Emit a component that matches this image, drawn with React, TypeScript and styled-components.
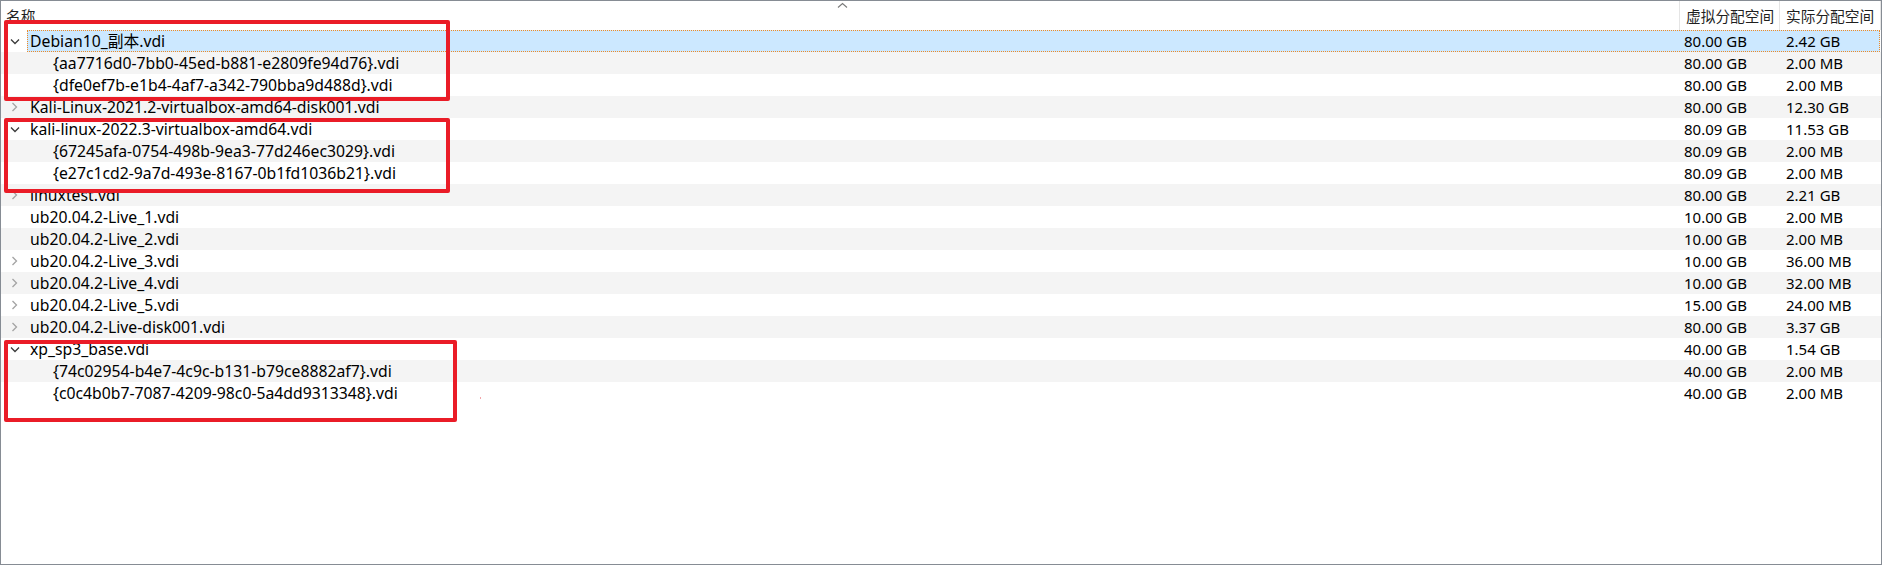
import React from "react";
import styled, { createGlobalStyle, css } from "styled-components";

const Global = createGlobalStyle`
  html, body { margin: 0; padding: 0; background: #ffffff; }
  body { font-family: "Noto Sans", "Noto Sans CJK SC", sans-serif; }
  * { box-sizing: border-box; }
`;

type Twisty = "open" | "closed" | "none";
interface Row {
  name: string;
  level: 0 | 1;
  twisty: Twisty;
  virt: string;
  actual: string;
  selected?: boolean;
}

const rows: Row[] = [
  { name: "Debian10_副本.vdi", level: 0, twisty: "open", virt: "80.00 GB", actual: "2.42 GB", selected: true },
  { name: "{aa7716d0-7bb0-45ed-b881-e2809fe94d76}.vdi", level: 1, twisty: "none", virt: "80.00 GB", actual: "2.00 MB" },
  { name: "{dfe0ef7b-e1b4-4af7-a342-790bba9d488d}.vdi", level: 1, twisty: "none", virt: "80.00 GB", actual: "2.00 MB" },
  { name: "Kali-Linux-2021.2-virtualbox-amd64-disk001.vdi", level: 0, twisty: "closed", virt: "80.00 GB", actual: "12.30 GB" },
  { name: "kali-linux-2022.3-virtualbox-amd64.vdi", level: 0, twisty: "open", virt: "80.09 GB", actual: "11.53 GB" },
  { name: "{67245afa-0754-498b-9ea3-77d246ec3029}.vdi", level: 1, twisty: "none", virt: "80.09 GB", actual: "2.00 MB" },
  { name: "{e27c1cd2-9a7d-493e-8167-0b1fd1036b21}.vdi", level: 1, twisty: "none", virt: "80.09 GB", actual: "2.00 MB" },
  { name: "linuxtest.vdi", level: 0, twisty: "closed", virt: "80.00 GB", actual: "2.21 GB" },
  { name: "ub20.04.2-Live_1.vdi", level: 0, twisty: "none", virt: "10.00 GB", actual: "2.00 MB" },
  { name: "ub20.04.2-Live_2.vdi", level: 0, twisty: "none", virt: "10.00 GB", actual: "2.00 MB" },
  { name: "ub20.04.2-Live_3.vdi", level: 0, twisty: "closed", virt: "10.00 GB", actual: "36.00 MB" },
  { name: "ub20.04.2-Live_4.vdi", level: 0, twisty: "closed", virt: "10.00 GB", actual: "32.00 MB" },
  { name: "ub20.04.2-Live_5.vdi", level: 0, twisty: "closed", virt: "15.00 GB", actual: "24.00 MB" },
  { name: "ub20.04.2-Live-disk001.vdi", level: 0, twisty: "closed", virt: "80.00 GB", actual: "3.37 GB" },
  { name: "xp_sp3_base.vdi", level: 0, twisty: "open", virt: "40.00 GB", actual: "1.54 GB" },
  { name: "{74c02954-b4e7-4c9c-b131-b79ce8882af7}.vdi", level: 1, twisty: "none", virt: "40.00 GB", actual: "2.00 MB" },
  { name: "{c0c4b0b7-7087-4209-98c0-5a4dd9313348}.vdi", level: 1, twisty: "none", virt: "40.00 GB", actual: "2.00 MB" },
];

const Window = styled.div`
  position: relative;
  width: 1882px;
  height: 565px;
  border: 1px solid #868c94;
  background: #ffffff;
  overflow: hidden;
  color: #000;
`;

const Header = styled.div`
  position: relative;
  display: grid;
  grid-template-columns: 1679px 100px 1fr;
  height: 29px;
  color: #1f1f1f;
  font-size: 14.7px;
`;

const HeaderCell = styled.div<{ $pad: number }>`
  display: flex;
  align-items: center;
  padding-left: ${(p) => p.$pad}px;
  padding-bottom: 1px;
  white-space: nowrap;
  border-right: 1px solid #e5e5e5;
`;

const SortArrow = styled.svg`
  position: absolute;
  left: 836px;
  top: 1px;
`;

const List = styled.div`
  display: flex;
  flex-direction: column;
`;

const RowLine = styled.div<{ $stripe: boolean }>`
  display: flex;
  height: 22px;
  background: ${(p) => (p.$stripe ? "#f4f4f4" : "transparent")};
`;

const TwistyBox = styled.div`
  width: 26px;
  flex: none;
  display: flex;
  align-items: center;
  justify-content: center;
  padding-left: 1px;
`;

const RowBody = styled.div<{ $selected: boolean }>`
  flex: 1;
  display: grid;
  grid-template-columns: 1653px 100px 1fr;
  align-items: center;
  margin-right: 1px;
  border: 1px solid transparent;
  ${(p) =>
    p.$selected &&
    css`
      background: #cce8ff;
      border: 1px dotted #f08a24;
    `}
`;

const NameCell = styled.div<{ $level: number }>`
  padding-left: ${(p) => (p.$level === 1 ? 25 : 2)}px;
  white-space: nowrap;
  line-height: 20px;
  font-size: 15.75px;
`;

const ValueCell = styled.div<{ $pad: number }>`
  padding-left: ${(p) => p.$pad}px;
  white-space: nowrap;
  line-height: 20px;
  font-size: 15px;
`;

const Annotation = styled.div<{ $l: number; $t: number; $w: number; $h: number }>`
  position: absolute;
  left: ${(p) => p.$l}px;
  top: ${(p) => p.$t}px;
  width: ${(p) => p.$w}px;
  height: ${(p) => p.$h}px;
  border: 4px solid #ea1c27;
  border-radius: 2px;
  pointer-events: none;
`;

const Speck = styled.div`
  position: absolute;
  left: 479px;
  top: 396px;
  width: 1px;
  height: 2px;
  background: #f2a6aa;
`;

function Chevron({ kind }: { kind: Twisty }) {
  if (kind === "open") {
    return (
      <svg width="10" height="7" viewBox="0 0 10 7">
        <path d="M1 1.5 L5 5.5 L9 1.5" fill="none" stroke="#3a3a3a" strokeWidth="1.3" />
      </svg>
    );
  }
  if (kind === "closed") {
    return (
      <svg width="7" height="10" viewBox="0 0 7 10">
        <path d="M1.5 1 L5.5 5 L1.5 9" fill="none" stroke="#a3a3a3" strokeWidth="1.3" />
      </svg>
    );
  }
  return null;
}

export default function App() {
  return (
    <>
      <Global />
      <Window>
        <Header>
          <HeaderCell $pad={5}>名称</HeaderCell>
          <HeaderCell $pad={6}>虚拟分配空间</HeaderCell>
          <HeaderCell $pad={6}>实际分配空间</HeaderCell>
          <SortArrow width="11" height="7" viewBox="0 0 11 7">
            <path d="M1 5.5 L5.5 1.5 L10 5.5" fill="none" stroke="#7a7a7a" strokeWidth="1.1" />
          </SortArrow>
        </Header>
        <List>
          {rows.map((r, i) => (
            <RowLine key={i} $stripe={i % 2 === 1}>
              <TwistyBox>
                <Chevron kind={r.twisty} />
              </TwistyBox>
              <RowBody $selected={!!r.selected}>
                <NameCell $level={r.level}>{r.name}</NameCell>
                <ValueCell $pad={3}>{r.virt}</ValueCell>
                <ValueCell $pad={5}>{r.actual}</ValueCell>
              </RowBody>
            </RowLine>
          ))}
        </List>
        <Annotation $l={3} $t={19} $w={446} $h={81} />
        <Annotation $l={3} $t={117} $w={446} $h={75} />
        <Annotation $l={3} $t={339} $w={453} $h={82} />
        <Speck />
      </Window>
    </>
  );
}
